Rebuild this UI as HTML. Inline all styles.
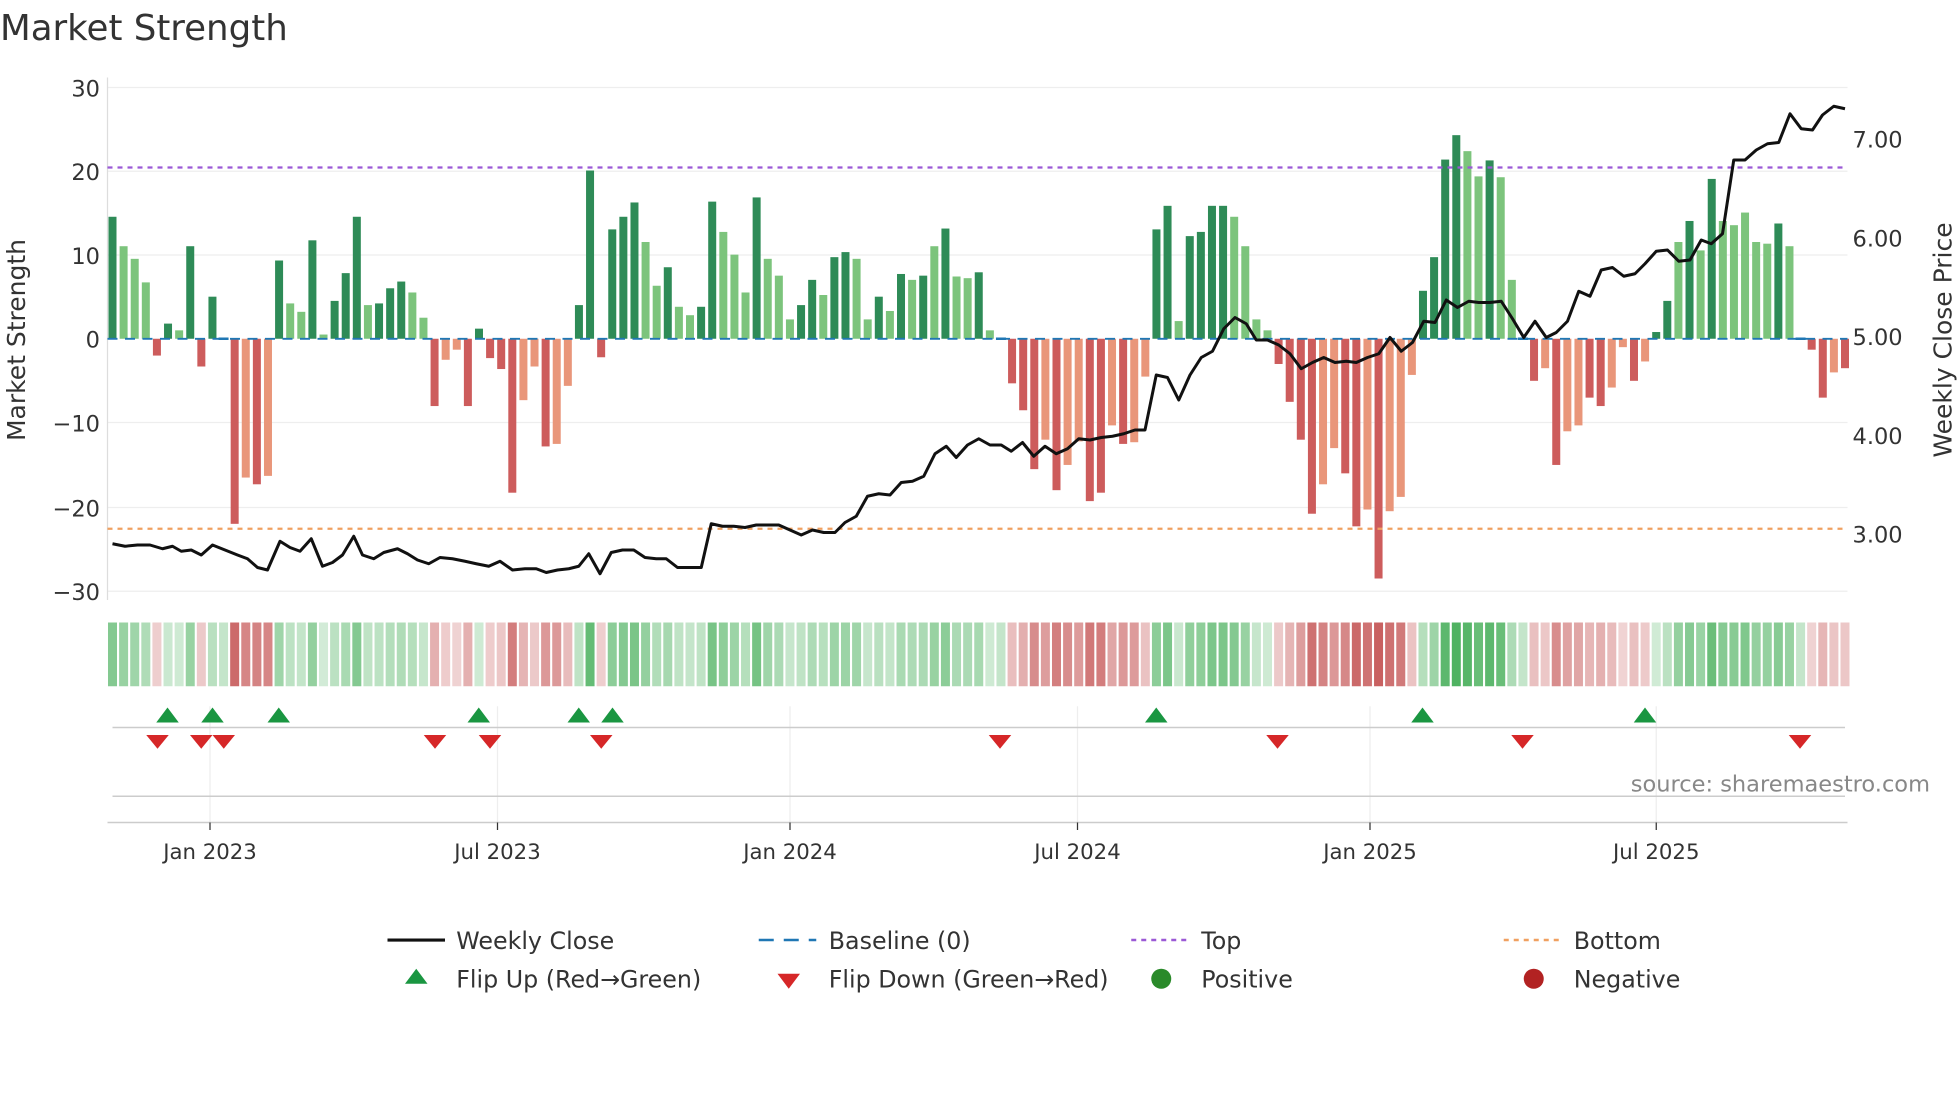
<!DOCTYPE html>
<html><head><meta charset="utf-8"><style>
html,body{margin:0;padding:0;background:#fff;}
svg{display:block;font-family:"DejaVu Sans","Liberation Sans",sans-serif;}
</style></head><body>
<svg id="c" width="1960" height="1102" viewBox="0 0 1568 881.6" xmlns="http://www.w3.org/2000/svg">
<rect width="1568" height="882" fill="#fff"/>
<text x="0" y="32" font-size="28.5" fill="#333">Market Strength</text>
<g stroke="#eeeeee" stroke-width="1">
<line x1="86" y1="70" x2="1478" y2="70"/><line x1="86" y1="137" x2="1478" y2="137"/><line x1="86" y1="204" x2="1478" y2="204"/><line x1="86" y1="338" x2="1478" y2="338"/><line x1="86" y1="406" x2="1478" y2="406"/><line x1="86" y1="473" x2="1478" y2="473"/>
</g>
<line x1="86" y1="62" x2="86" y2="480" stroke="#ddd"/>
<g font-size="18" fill="#333" text-anchor="end">
<text x="80" y="77">30</text><text x="80" y="144">20</text><text x="80" y="211">10</text><text x="80" y="278">0</text><text x="80" y="345">−10</text><text x="80" y="413">−20</text><text x="80" y="480">−30</text>
</g>
<g font-size="18" fill="#333">
<text x="1482" y="118">7.00</text><text x="1482" y="197">6.00</text><text x="1482" y="276">5.00</text><text x="1482" y="355">4.00</text><text x="1482" y="434">3.00</text>
</g>
<text transform="translate(20,272) rotate(-90)" font-size="20" fill="#333" text-anchor="middle">Market Strength</text>
<text transform="translate(1561,272) rotate(-90)" font-size="20" fill="#333" text-anchor="middle">Weekly Close Price</text>
<g id="bars"></g>
<g id="heat"></g>
<line x1="86" y1="134" x2="1478" y2="134" stroke="#9b59d6" stroke-width="1.8" stroke-dasharray="4,4"/>
<line x1="86" y1="423" x2="1478" y2="423" stroke="#f0a060" stroke-width="1.8" stroke-dasharray="4,4"/>
<polyline id="pl" fill="none" stroke="#111" stroke-width="2.4" stroke-linejoin="round"/>
<g stroke="#eee"><line x1="168" y1="565" x2="168" y2="658"/><line x1="398" y1="565" x2="398" y2="658"/><line x1="632" y1="565" x2="632" y2="658"/><line x1="862" y1="565" x2="862" y2="658"/><line x1="1096" y1="565" x2="1096" y2="658"/><line x1="1325" y1="565" x2="1325" y2="658"/></g>
<line x1="90" y1="582" x2="1476" y2="582" stroke="#ccc" stroke-width="1.2"/>
<line x1="90" y1="637" x2="1476" y2="637" stroke="#ccc" stroke-width="1.2"/>
<line x1="86" y1="658" x2="1478" y2="658" stroke="#ccc" stroke-width="1.2"/>
<g id="mk"></g>
<text x="1544" y="633" font-size="18" fill="#888" text-anchor="end">source: sharemaestro.com</text>
<g font-size="17" fill="#333" text-anchor="middle">
<text x="168" y="687">Jan 2023</text><text x="398" y="687">Jul 2023</text><text x="632" y="687">Jan 2024</text><text x="862" y="687">Jul 2024</text><text x="1096" y="687">Jan 2025</text><text x="1325" y="687">Jul 2025</text>
</g>
<g stroke="#333" stroke-width="1"><line x1="168" y1="658" x2="168" y2="664"/><line x1="398" y1="658" x2="398" y2="664"/><line x1="632" y1="658" x2="632" y2="664"/><line x1="862" y1="658" x2="862" y2="664"/><line x1="1096" y1="658" x2="1096" y2="664"/><line x1="1325" y1="658" x2="1325" y2="664"/></g>
<g font-size="19" fill="#333">
<line x1="310" y1="752" x2="356" y2="752" stroke="#111" stroke-width="2.5"/><text x="365" y="759">Weekly Close</text>
<line x1="607" y1="752" x2="653" y2="752" stroke="#1f77b4" stroke-width="2" stroke-dasharray="12,8"/><text x="663" y="759">Baseline (0)</text>
<line x1="905" y1="752" x2="951" y2="752" stroke="#9b59d6" stroke-width="2" stroke-dasharray="4,4"/><text x="961" y="759">Top</text>
<line x1="1203" y1="752" x2="1249" y2="752" stroke="#f0a060" stroke-width="2" stroke-dasharray="4,4"/><text x="1259" y="759">Bottom</text>
<polygon points="333,775 324,787 342,787" fill="#1a9641"/><text x="365" y="790">Flip Up (Red→Green)</text>
<polygon points="622,779 640,779 631,791" fill="#d62728"/><text x="663" y="790">Flip Down (Green→Red)</text>
<circle cx="929" cy="783" r="8" fill="#2a8a2a"/><text x="961" y="790">Positive</text>
<circle cx="1227" cy="783" r="8" fill="#b22222"/><text x="1259" y="790">Negative</text>
</g>
</svg>
<script>
var D="14.5g,11l,9.5l,6.7l,-2r,1.8g,1l,11g,-3.3r,5g,0,-22r,-16.5s,-17.3r,-16.3s,9.3g,4.2l,3.2l,11.7g,0.5l,4.5g,7.8g,14.5g,4l,4.2g,6g,6.8g,5.5l,2.5l,-8r,-2.5s,-1.3s,-8r,1.2g,-2.3r,-3.6r,-18.3r,-7.3s,-3.3s,-12.8r,-12.5s,-5.6s,4g,20g,-2.2r,13g,14.5g,16.2g,11.5l,6.3l,8.5g,3.8l,2.8l,3.8g,16.3g,12.7l,10l,5.5l,16.8g,9.5l,7.5l,2.3l,4g,7g,5.2l,9.7g,10.3g,9.5l,2.3l,5g,3.3l,7.7g,7l,7.5g,11l,13.1g,7.4l,7.2l,7.9g,1l,0,-5.3r,-8.5r,-15.5r,-12s,-18r,-15s,-12.2s,-19.3r,-18.3r,-10.3s,-12.5r,-12.3s,-4.5s,13g,15.8g,2.1l,12.2g,12.7g,15.8g,15.8g,14.5l,11l,2.3l,1l,-3r,-7.5r,-12r,-20.8r,-17.3s,-13s,-16r,-22.3r,-20.3s,-28.5r,-20.5s,-18.8s,-4.3s,5.7g,9.7g,21.3g,24.2g,22.3l,19.3l,21.2g,19.2l,7l,0,-5r,-3.5s,-15r,-11s,-10.3s,-7r,-8r,-5.8s,-1s,-5r,-2.7s,0.8g,4.5g,11.5l,14g,10.5l,19g,14l,13.5l,15l,11.5l,11.3l,13.7g,11l,0,-1.3r,-7r,-4s,-3.5r".split(",");
var col={g:"#2e8b57",l:"#7cc47c",r:"#cd5c5c",s:"#e9967a"};
var b="",h="",n=D.length,step=(1476-90)/(n-1);
for(var i=0;i<n;i++){var x=90+i*step,v=parseFloat(D[i]),c=D[i].slice(-1);
 if(v===0||!col[c]){b+='<line x1="'+(x-4)+'" y1="271" x2="'+(x+4)+'" y2="271" stroke="#1f77b4" stroke-width="2"/>';}
 else{var y=271-v*6.73;b+='<rect x="'+(x-3.2)+'" y="'+Math.min(y,271)+'" width="6.4" height="'+Math.abs(v*6.73)+'" fill="'+col[c]+'"/>';}
 var a=Math.min(0.9,0.22+Math.abs(v)/35),hc=v>=0?"rgba(60,170,80,"+a.toFixed(2)+")":"rgba(195,80,80,"+a.toFixed(2)+")";
 if(v===0)hc="rgba(60,170,80,0.3)";
 h+='<rect x="'+(x-3.6)+'" y="498" width="7.2" height="51" fill="'+hc+'"/>';
}
b+='<g stroke="#1f77b4" stroke-width="1.5" stroke-dasharray="8,6"><line x1="86" y1="271" x2="1478" y2="271"/></g>';
document.getElementById("bars").innerHTML=b;document.getElementById("heat").innerHTML=h;
document.getElementById("pl").setAttribute("points","90,435 100,437 110,436 120,436 130,439 138,437 145,441 153,440 161,444 170,436 180,440 190,444 198,447 206,454 214,456 224,433 232,438 240,441 249,431 258,453 266,450 274,444 283,429 290,444 299,447 307,442 318,439 326,443 334,448 343,451 352,446 362,447 372,449 381,451 391,453 400,449 410,456 420,455 429,455 437,458 446,456 455,455 463,453 471,443 480,459 489,442 498,440 507,440 516,446 525,447 533,447 542,454 552,454 561,454 569,419 578,421 587,421 596,422 605,420 614,420 623,420 632,424 641,428 650,424 659,426 668,426 676,418 685,413 694,397 703,395 712,396 721,386 730,385 739,381 748,363 757,357 765,366 774,356 783,351 792,356 801,356 809,361 818,354 827,365 836,357 845,363 854,359 863,351 872,352 881,350 890,349 899,347 908,344 916,344 925,300 934,302 943,320 952,300 961,286 970,281 979,263 988,254 997,259 1005,272 1014,272 1023,276 1032,283 1041,295 1050,290 1059,286 1068,290 1077,289 1085,290 1094,286 1103,283 1112,270 1121,281 1130,274 1139,257 1148,258 1157,240 1166,246 1175,241 1183,242 1192,242 1201,241 1210,255 1219,270 1228,257 1237,270 1245,266 1254,257 1263,233 1272,237 1281,216 1290,214 1299,221 1308,219 1316,211 1325,201 1334,200 1343,209 1352,208 1361,192 1369,195 1378,187 1387,128 1396,128 1405,120 1414,115 1423,114 1432,91 1441,103 1450,104 1458,92 1467,85 1476,87");
var up=[134,170,223,383,463,490,925,1138,1316],dn=[126,161,179,348,392,481,800,1022,1218,1440],m="";
up.forEach(function(x){m+='<polygon points="'+x+',566 '+(x-9)+',578 '+(x+9)+',578" fill="#1a9641"/>';});
dn.forEach(function(x){m+='<polygon points="'+(x-9)+',588 '+(x+9)+',588 '+x+',599" fill="#d62728"/>';});
document.getElementById("mk").innerHTML=m;
</script>
</body></html>
